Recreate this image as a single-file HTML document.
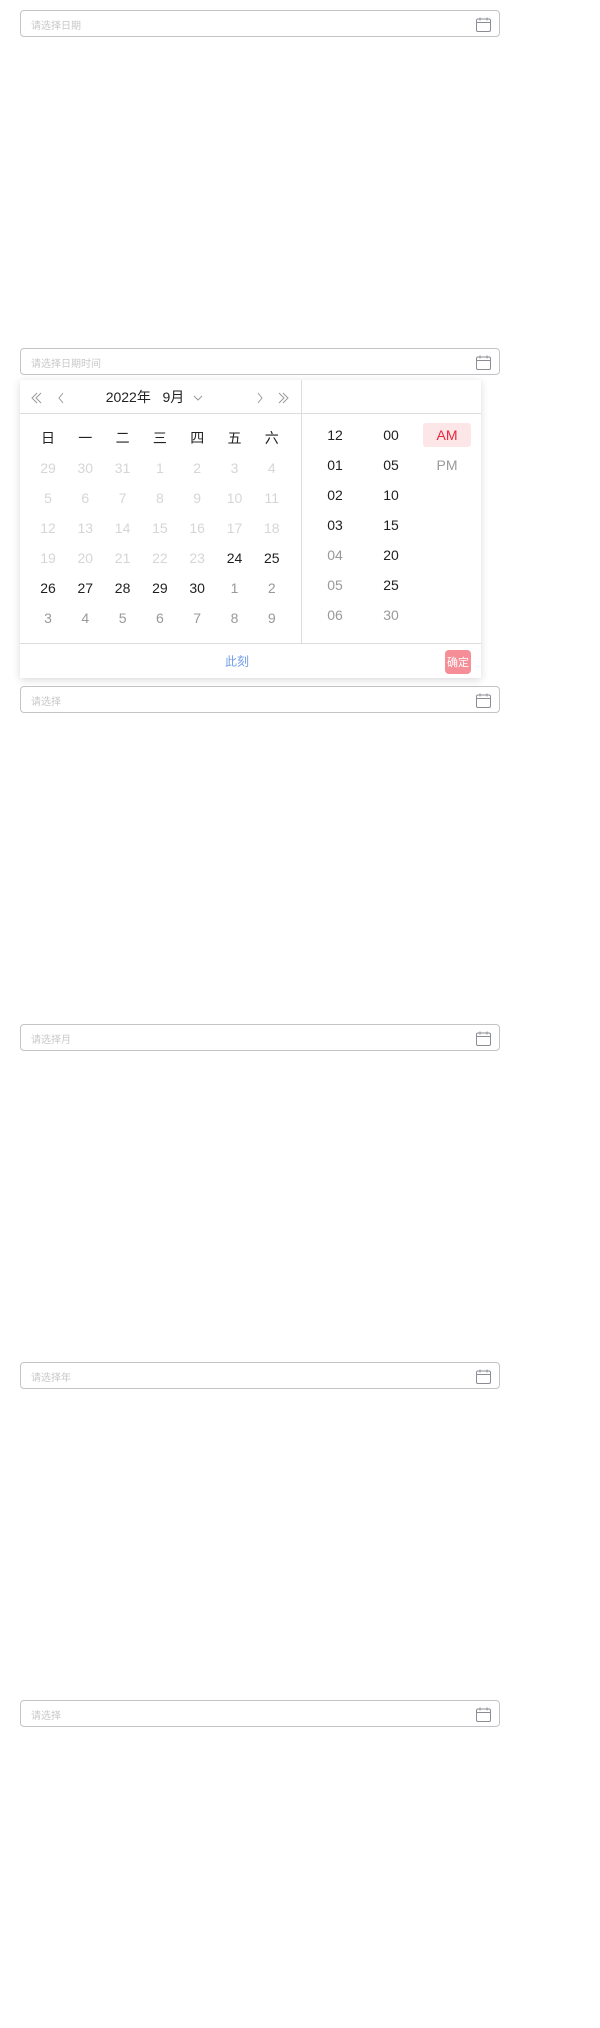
<!DOCTYPE html>
<html><head><meta charset="utf-8"><style>
*{box-sizing:border-box;margin:0;padding:0}
body{width:600px;height:2028px;background:#fff;font-family:"Liberation Sans","Noto Sans CJK SC",sans-serif;position:relative;overflow:hidden}
.inp{position:absolute;left:20px;width:480px;height:27px;border:1px solid #c4c4c8;border-radius:4px;background:#fff}
.inp span{position:absolute;left:10px;top:6px;font-size:10px;color:#c8c8c8}
.inp svg{position:absolute;left:455px;top:6px}
.panel{position:absolute;left:20px;top:380px;width:461px;height:298px;background:#fff;box-shadow:0 2px 8px rgba(0,0,0,.15)}
.t{position:absolute;font-size:14px;transform:translate(-50%,-50%);white-space:nowrap}
.hl{position:absolute;background:#ddd}
</style></head><body>
<div class="inp" style="top:10px"><span>请选择日期</span><svg width="15" height="15" viewBox="0 0 15 15" fill="none" stroke="#8a8d94" stroke-width="1"><rect x="0.5" y="2" width="14" height="12.5" rx="1.5"/><path d="M0.5 5.5h14M4 0.5v3M11 0.5v3"/></svg></div>
<div class="inp" style="top:348px"><span>请选择日期时间</span><svg width="15" height="15" viewBox="0 0 15 15" fill="none" stroke="#8a8d94" stroke-width="1"><rect x="0.5" y="2" width="14" height="12.5" rx="1.5"/><path d="M0.5 5.5h14M4 0.5v3M11 0.5v3"/></svg></div>
<div class="inp" style="top:686px"><span>请选择</span><svg width="15" height="15" viewBox="0 0 15 15" fill="none" stroke="#8a8d94" stroke-width="1"><rect x="0.5" y="2" width="14" height="12.5" rx="1.5"/><path d="M0.5 5.5h14M4 0.5v3M11 0.5v3"/></svg></div>
<div class="inp" style="top:1024px"><span>请选择月</span><svg width="15" height="15" viewBox="0 0 15 15" fill="none" stroke="#8a8d94" stroke-width="1"><rect x="0.5" y="2" width="14" height="12.5" rx="1.5"/><path d="M0.5 5.5h14M4 0.5v3M11 0.5v3"/></svg></div>
<div class="inp" style="top:1362px"><span>请选择年</span><svg width="15" height="15" viewBox="0 0 15 15" fill="none" stroke="#8a8d94" stroke-width="1"><rect x="0.5" y="2" width="14" height="12.5" rx="1.5"/><path d="M0.5 5.5h14M4 0.5v3M11 0.5v3"/></svg></div>
<div class="inp" style="top:1700px"><span>请选择</span><svg width="15" height="15" viewBox="0 0 15 15" fill="none" stroke="#8a8d94" stroke-width="1"><rect x="0.5" y="2" width="14" height="12.5" rx="1.5"/><path d="M0.5 5.5h14M4 0.5v3M11 0.5v3"/></svg></div>

<div class="panel"></div>
<div class="hl" style="left:20px;top:413px;width:461px;height:1px"></div>
<div class="hl" style="left:20px;top:643px;width:461px;height:1px"></div>
<div class="hl" style="left:301px;top:380px;width:1px;height:263px"></div>
<div style="position:absolute;left:423px;top:423px;width:48px;height:24px;border-radius:3px;background:#fde6e8"></div>
<svg style="position:absolute;left:30px;top:390px" width="270" height="16" fill="none" stroke="#999" stroke-width="1">
<path d="M7 3l-5 5 5 5M11 3l-5 5 5 5M33 3l-4 5 4 5M164 6l4 4 4-4M228 3l4 5-4 5M249 3l5 5-5 5M253 3l5 5-5 5"/>
</svg>
<div class="t" style="left:145px;top:397px;color:#222">2022年&nbsp;&nbsp; 9月</div>
<div id="cal"></div>
<div class="t" style="left:237px;top:661px;color:#6f9dea;font-size:12px">此刻</div>
<div style="position:absolute;left:445px;top:650px;width:26px;height:24px;border-radius:4px;background:#f58e97"></div>
<div class="t" style="left:458px;top:662px;color:#fff;font-size:11px">确定</div>
<script>
var out='';
function t(x,y,s,c){out+='<div class="t" style="left:'+x+'px;top:'+y+'px;color:'+c+'">'+s+'</div>';}
var wd=['日','一','二','三','四','五','六'];
for(var i=0;i<7;i++)t(48+i*37.3,438,wd[i],'#222');
var days=[[29,30,31,1,2,3,4],[5,6,7,8,9,10,11],[12,13,14,15,16,17,18],[19,20,21,22,23,24,25],[26,27,28,29,30,1,2],[3,4,5,6,7,8,9]];
for(var r=0;r<6;r++)for(var c=0;c<7;c++){var col='#d6d6d6';if((r==3&&c>=5)||(r==4&&c<5))col='#1f1f1f';else if(r==4||r==5)col='#999';t(48+c*37.3,468+r*30,days[r][c],col);}
var h=['12','01','02','03','04','05','06'],m=['00','05','10','15','20','25','30'];
for(var k=0;k<7;k++){t(335,435+k*30,h[k],k<4?'#1f1f1f':'#999');t(391,435+k*30,m[k],k<6?'#1f1f1f':'#999');}
t(447,435,'AM','#e5283b');t(447,465,'PM','#999');
document.getElementById('cal').innerHTML=out;
</script>
</body></html>
